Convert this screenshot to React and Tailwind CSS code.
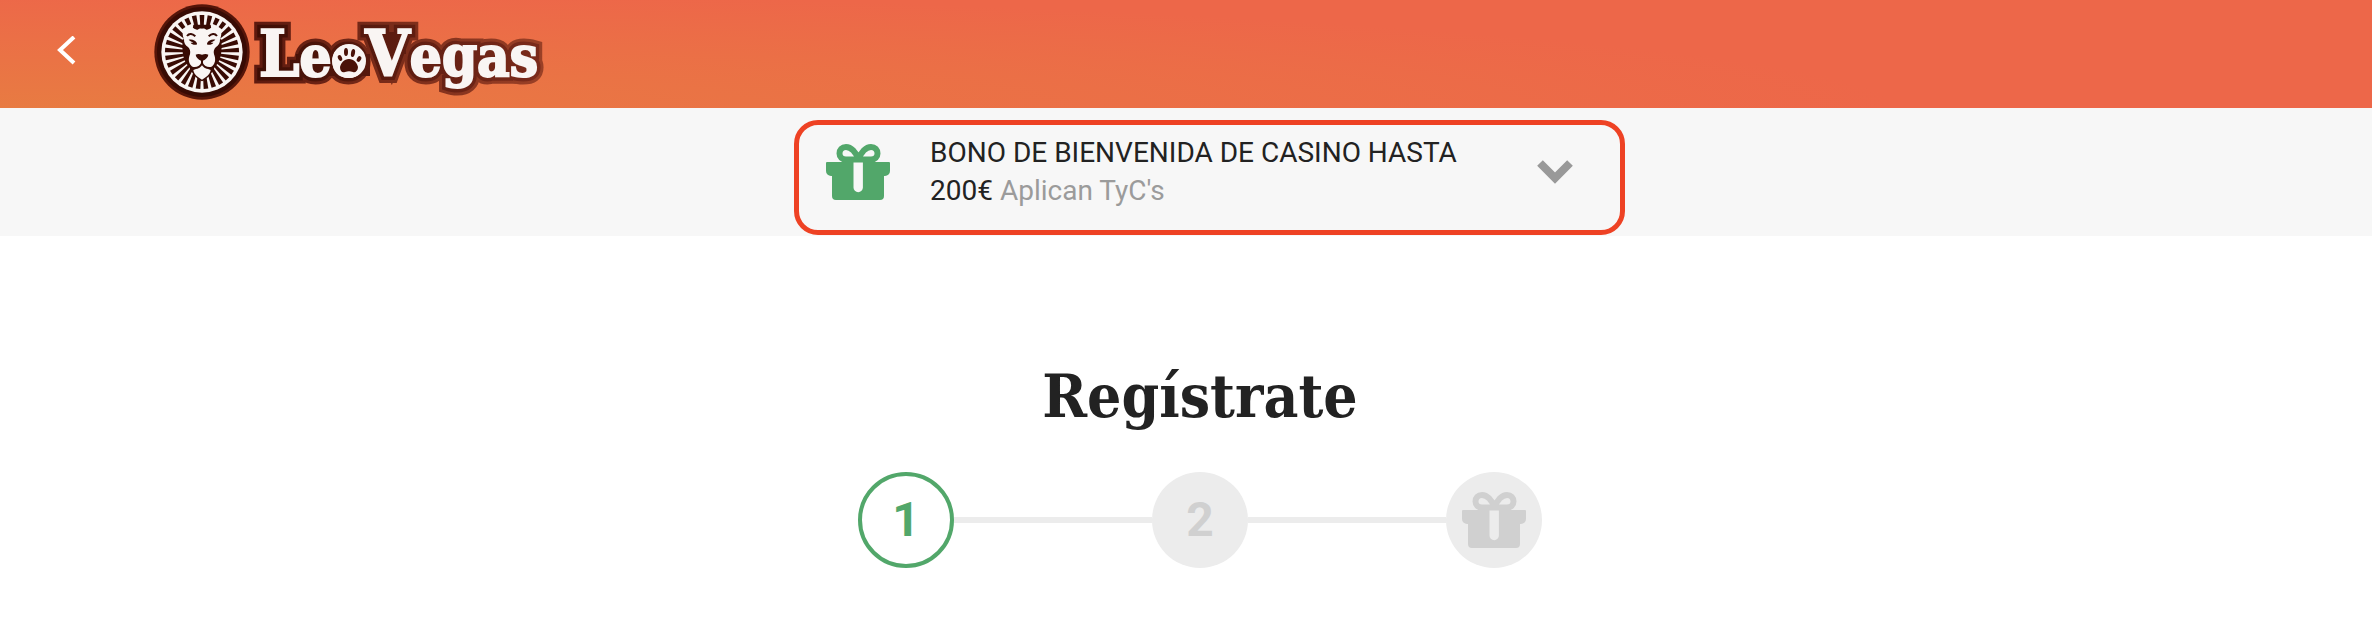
import React from 'react';

const RAY_STEP = 360 / 29;
const RAYS = Array.from({ length: 29 }, (_, i) => i);
// the mane is cut short just above both ears
const SHORT_RAYS = [2, 3, 26, 27];

function GiftIcon({ className }) {
  return (
    <svg viewBox="0 0 64 56" className={className} fill="currentColor" aria-hidden="true">
      <path d="M0 19a1 1 0 0 1 1-1h26.500v25.500a4.700 4.700 0 0 0 9.400 0V18H63a1 1 0 0 1 1 1v8a5 5 0 0 1-5 5h-1v20a4 4 0 0 1-4 4H10a4 4 0 0 1-4-4V32H5a5 5 0 0 1-5-5z" />
      <path
        d="M32.500 15.500C30 8 25 3 20 3c-4 0-6.500 3-6.500 6.500 0 3.500 2.500 6 6.500 6z M32.500 15.500C35 8 40 3 45 3c4 0 6.500 3 6.500 6.500 0 3.500-2.500 6-6.500 6z"
        fill="none"
        stroke="currentColor"
        strokeWidth="6"
      />
    </svg>
  );
}

function LionBadge() {
  return (
    <svg viewBox="12 12 288 288" className="w-24 h-24 flex-shrink-0" aria-hidden="true">
      <circle cx="156" cy="156" r="143" fill="#551509" />
      <circle cx="156" cy="156" r="135" fill="#380b04" />
      <circle cx="156" cy="156" r="122" fill="#f9f5f3" />
      <g fill="#380b04">
        {RAYS.map((i) => (
          <path
            key={i}
            d={SHORT_RAYS.includes(i) ? 'M149 45h14l-1 21h-12z' : 'M149 45h14l-4 75h-6z'}
            transform={`rotate(${i * RAY_STEP} 156 156)`}
          />
        ))}
        <path d="M130 74l52 0 2 14h-56z" />
        <path d="M98 118c-2 30-2 62 20 84 8 18 20 34 38 42 18-8 30-24 38-42 22-22 22-54 20-84z" />
      </g>
      <path
        fill="#f9f5f3"
        d="M101 90c8-10 22-9 29-6 5 3 8 6 13 5 5-3 8-5 13-3 5-2 8 0 13 3 5 1 8-2 13-5 7-3 21-4 29 6 5 9 3 19-1 27 1 12-5 20-12 24-6 6-8 12-6 22 4 10 6 22-2 32-6 8-15 12-22 10l14 5c-2 14-14 22-26 29-12-7-24-15-26-29l14-5c-7 2-16-2-22-10-8-10-6-22-2-32 2-10 0-16-6-22-7-4-13-12-12-24-4-8-6-18-1-27z"
      />
      <g fill="#380b04">
        <path d="M137 164c6-3 12-2 19 0 7-2 13-3 19 0-1 8-8 14-16 18v10h-6v-10c-8-4-15-10-16-18z" />
        <path d="M116 119c10-2 20 1 25 11l-1 4c-9 1-15-1-18-6l8 0c-5-3-9-5-14-9z" />
        <path d="M196 119c-10-2-20 1-25 11l1 4c9 1 15-1 18-6l-8 0c5-3 9-5 14-9z" />
      </g>
      <g fill="none" stroke="#380b04" strokeWidth="6">
        <path d="M111 108c7-9 16-7 25 1" />
        <path d="M201 108c-7-9-16-7-25 1" />
        <path d="M156 190c-5 10-16 16-30 13M156 190c5 10 16 16 30 13" />
      </g>
    </svg>
  );
}

function Wordmark() {
  return (
    <svg viewBox="0 0 300 96" className="w-[300px] h-24 flex-shrink-0" role="img" aria-label="LeoVegas">
      <defs>
        <linearGradient id="edge" gradientUnits="userSpaceOnUse" x1="0" y1="0" x2="292" y2="0">
          <stop offset="0" stopColor="#5c190e" />
          <stop offset="1" stopColor="#9a4026" />
        </linearGradient>
        <linearGradient id="body" gradientUnits="userSpaceOnUse" x1="0" y1="0" x2="292" y2="0">
          <stop offset="0" stopColor="#3d0d04" />
          <stop offset="1" stopColor="#7c2b1b" />
        </linearGradient>
      </defs>
      <use href="#word" fill="url(#edge)" stroke="url(#edge)" strokeWidth="15" />
      <use href="#word" fill="url(#body)" stroke="url(#body)" strokeWidth="9" />
      <path d="M46 50h74v22H46zM122 28h34v22h-34zM166 46h110v24H166z" fill="url(#body)" />
      <g fill="#f9f5f3" stroke="#f9f5f3" strokeWidth="2">
        <g id="word" className="font-['DejaVu_Serif_Condensed','DejaVu_Serif',serif] font-bold">
          <text x="9" y="72" fontSize="56">
            <tspan fontSize="64">L</tspan>eo<tspan fontSize="64">V</tspan>egas
          </text>
        </g>
        <circle cx="99" cy="57" r="16" />
      </g>
      <g fill="#4a1208">
        <path d="M99 55c5 0 8 4 9 8 0 4-3 6-5 5-3-1-5-1-8 0s-5-1-5-5c1-4 4-8 9-8z" />
        <ellipse cx="90" cy="54" rx="2" ry="3" transform="rotate(-25 90 54)" />
        <ellipse cx="96" cy="48" rx="2" ry="4" />
        <ellipse cx="103" cy="49" rx="2" ry="4" transform="rotate(10 103 49)" />
        <ellipse cx="109" cy="55" rx="2" ry="3" transform="rotate(30 109 55)" />
      </g>
    </svg>
  );
}

export default function App() {
  return (
    <div className="min-h-screen bg-white font-['Roboto',sans-serif] text-[#222]">
      <header className="h-[108px] pb-1 pl-14 flex items-center bg-[radial-gradient(ellipse_80%_110%_at_0%_100%,#e87b42,#ed6749)]">
        <button aria-label="Atrás" className="text-white">
          <svg viewBox="0 0 20 32" className="w-5 h-8" fill="none" stroke="currentColor" strokeWidth="4" aria-hidden="true">
            <path d="M18 1 4 14l14 13" />
          </svg>
        </button>
        <a href="#" className="ml-[78px] flex items-center">
          <LionBadge />
          <Wordmark />
        </a>
      </header>

      <section className="bg-[#f7f7f7] h-32 pt-3 pl-[47px] flex justify-center items-start">
        <button className="w-[831px] h-[115px] rounded-3xl border-[5px] border-[#ee4224] pl-[27px] pr-[47px] pb-3 flex items-center text-left">
          <GiftIcon className="w-16 h-14 text-[#52a76a]" />
          <span className="ml-10 flex-1 text-[28px] leading-[38px]">
            BONO DE BIENVENIDA DE CASINO HASTA
            <br />
            200€ <span className="text-[#9b9b9b]">Aplican TyC's</span>
          </span>
          <svg viewBox="0 0 36 24" className="w-9 h-6 text-[#999]" fill="none" stroke="currentColor" strokeWidth="8" aria-hidden="true">
            <path d="m3 3 15 15L33 3" />
          </svg>
        </button>
      </section>

      <main className="pl-7 pt-30 flex flex-col items-center">
        <h1 className="font-['Roboto_Slab','DejaVu_Serif_Condensed','DejaVu_Serif',serif] font-bold text-[60px] leading-20">
          Regístrate
        </h1>
        <ol className="mt-9 flex items-center text-5xl font-bold">
          <li className="size-24 rounded-full border-4 border-[#52a76a] text-[#52a76a] flex items-center justify-center">1</li>
          <li aria-hidden="true" className="w-[198px] h-1.5 bg-[#ececec]" />
          <li className="size-24 rounded-full bg-[#ececec] text-[#d0d0d0] flex items-center justify-center">2</li>
          <li aria-hidden="true" className="w-[198px] h-1.5 bg-[#ececec]" />
          <li className="size-24 rounded-full bg-[#ececec] text-[#d0d0d0] flex items-center justify-center">
            <GiftIcon className="w-16 h-14" />
          </li>
        </ol>
      </main>
    </div>
  );
}
